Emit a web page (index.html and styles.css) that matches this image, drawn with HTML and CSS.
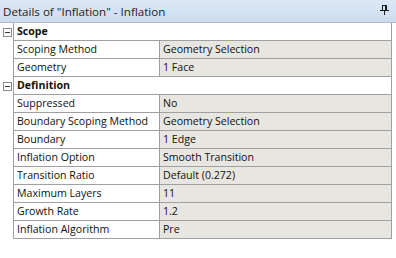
FILE: index.html
```html
<!DOCTYPE html>
<html>
<head>
<meta charset="utf-8">
<link rel="stylesheet" href="styles.css">
</head>
<body>
<div class="panel">
  <div class="titlebar">
    <span class="title">Details of "Inflation" - Inflation</span>
    <svg class="pin" width="9" height="10" viewBox="0 0 9 10">
      <path d="M2 0.5H7M2.5 0.5V5M6.5 0.5V5M5.5 0.5V5M0 5.5H9M4.5 5.5V10" stroke="#1a1a1a" stroke-width="1" fill="none"/>
    </svg>
  </div>
  <div class="grid">
    <div class="row section">
      <div class="gutter"><span class="toggle"></span></div>
      <div class="section-label">Scope</div>
    </div>
    <div class="row prop">
      <div class="gutter"></div>
      <div class="label">Scoping Method</div>
      <div class="value">Geometry Selection</div>
    </div>
    <div class="row prop">
      <div class="gutter"></div>
      <div class="label">Geometry</div>
      <div class="value">1 Face</div>
    </div>
    <div class="row section">
      <div class="gutter"><span class="toggle"></span></div>
      <div class="section-label">Definition</div>
    </div>
    <div class="row prop">
      <div class="gutter"></div>
      <div class="label">Suppressed</div>
      <div class="value">No</div>
    </div>
    <div class="row prop">
      <div class="gutter"></div>
      <div class="label">Boundary Scoping Method</div>
      <div class="value">Geometry Selection</div>
    </div>
    <div class="row prop">
      <div class="gutter"></div>
      <div class="label">Boundary</div>
      <div class="value">1 Edge</div>
    </div>
    <div class="row prop">
      <div class="gutter"></div>
      <div class="label">Inflation Option</div>
      <div class="value">Smooth Transition</div>
    </div>
    <div class="row prop">
      <div class="gutter"></div>
      <div class="label">Transition Ratio</div>
      <div class="value">Default (0.272)</div>
    </div>
    <div class="row prop">
      <div class="gutter"></div>
      <div class="label">Maximum Layers</div>
      <div class="value">11</div>
    </div>
    <div class="row prop">
      <div class="gutter"></div>
      <div class="label">Growth Rate</div>
      <div class="value">1.2</div>
    </div>
    <div class="row prop">
      <div class="gutter"></div>
      <div class="label">Inflation Algorithm</div>
      <div class="value">Pre</div>
    </div>
  </div>
</div>
</body>
</html>
```

FILE: styles.css
```css
html, body {
  margin: 0;
  padding: 0;
  background: #ffffff;
}
body {
  width: 396px;
  height: 258px;
  overflow: hidden;
  font-family: "Open Sans", "Noto Sans", sans-serif;
  font-size: 10.6px;
  color: #111111;
}
.panel {
  display: flex;
  flex-direction: column;
  width: 396px;
}
.titlebar {
  height: 22px;
  display: flex;
  align-items: center;
  justify-content: space-between;
  padding: 0 7px 0 3px;
  background: linear-gradient(#dde8f5, #cddcee);
  border-bottom: 1px solid #b3bcc6;
}
.title {
  font-size: 11.6px;
  color: #1e1e1e;
}
.pin {
  display: block;
  margin-top: -2px;
}
.grid {
  display: flex;
  flex-direction: column;
  width: 392px;
}
.row {
  display: grid;
  grid-template-columns: 13px 147px 1fr;
  height: 18px;
}
.gutter {
  display: flex;
  align-items: center;
  padding-left: 3px;
}
.toggle {
  position: relative;
  width: 7px;
  height: 7px;
  border: 1px solid #8c8c8c;
  background: #fff;
}
.toggle::after {
  content: "";
  position: absolute;
  left: 1px;
  top: 3px;
  width: 5px;
  height: 1px;
  background: #333;
}
.section-label {
  grid-column: 2 / 4;
  font-weight: bold;
  line-height: 17px;
  padding-left: 3px;
  border-left: 1px solid #a0a0a0;
  border-right: 1px solid #a0a0a0;
  border-bottom: 1px solid #a0a0a0;
  background: #fff;
}
.label {
  line-height: 17px;
  padding-left: 3px;
  border-left: 1px solid #a0a0a0;
  border-right: 1px solid #a0a0a0;
  border-bottom: 1px solid #a0a0a0;
  background: #fff;
  white-space: nowrap;
  overflow: hidden;
}
.value {
  line-height: 17px;
  padding-left: 3px;
  border-right: 1px solid #a0a0a0;
  border-bottom: 1px solid #a0a0a0;
  background: #e7e6e1;
  white-space: nowrap;
}
```
